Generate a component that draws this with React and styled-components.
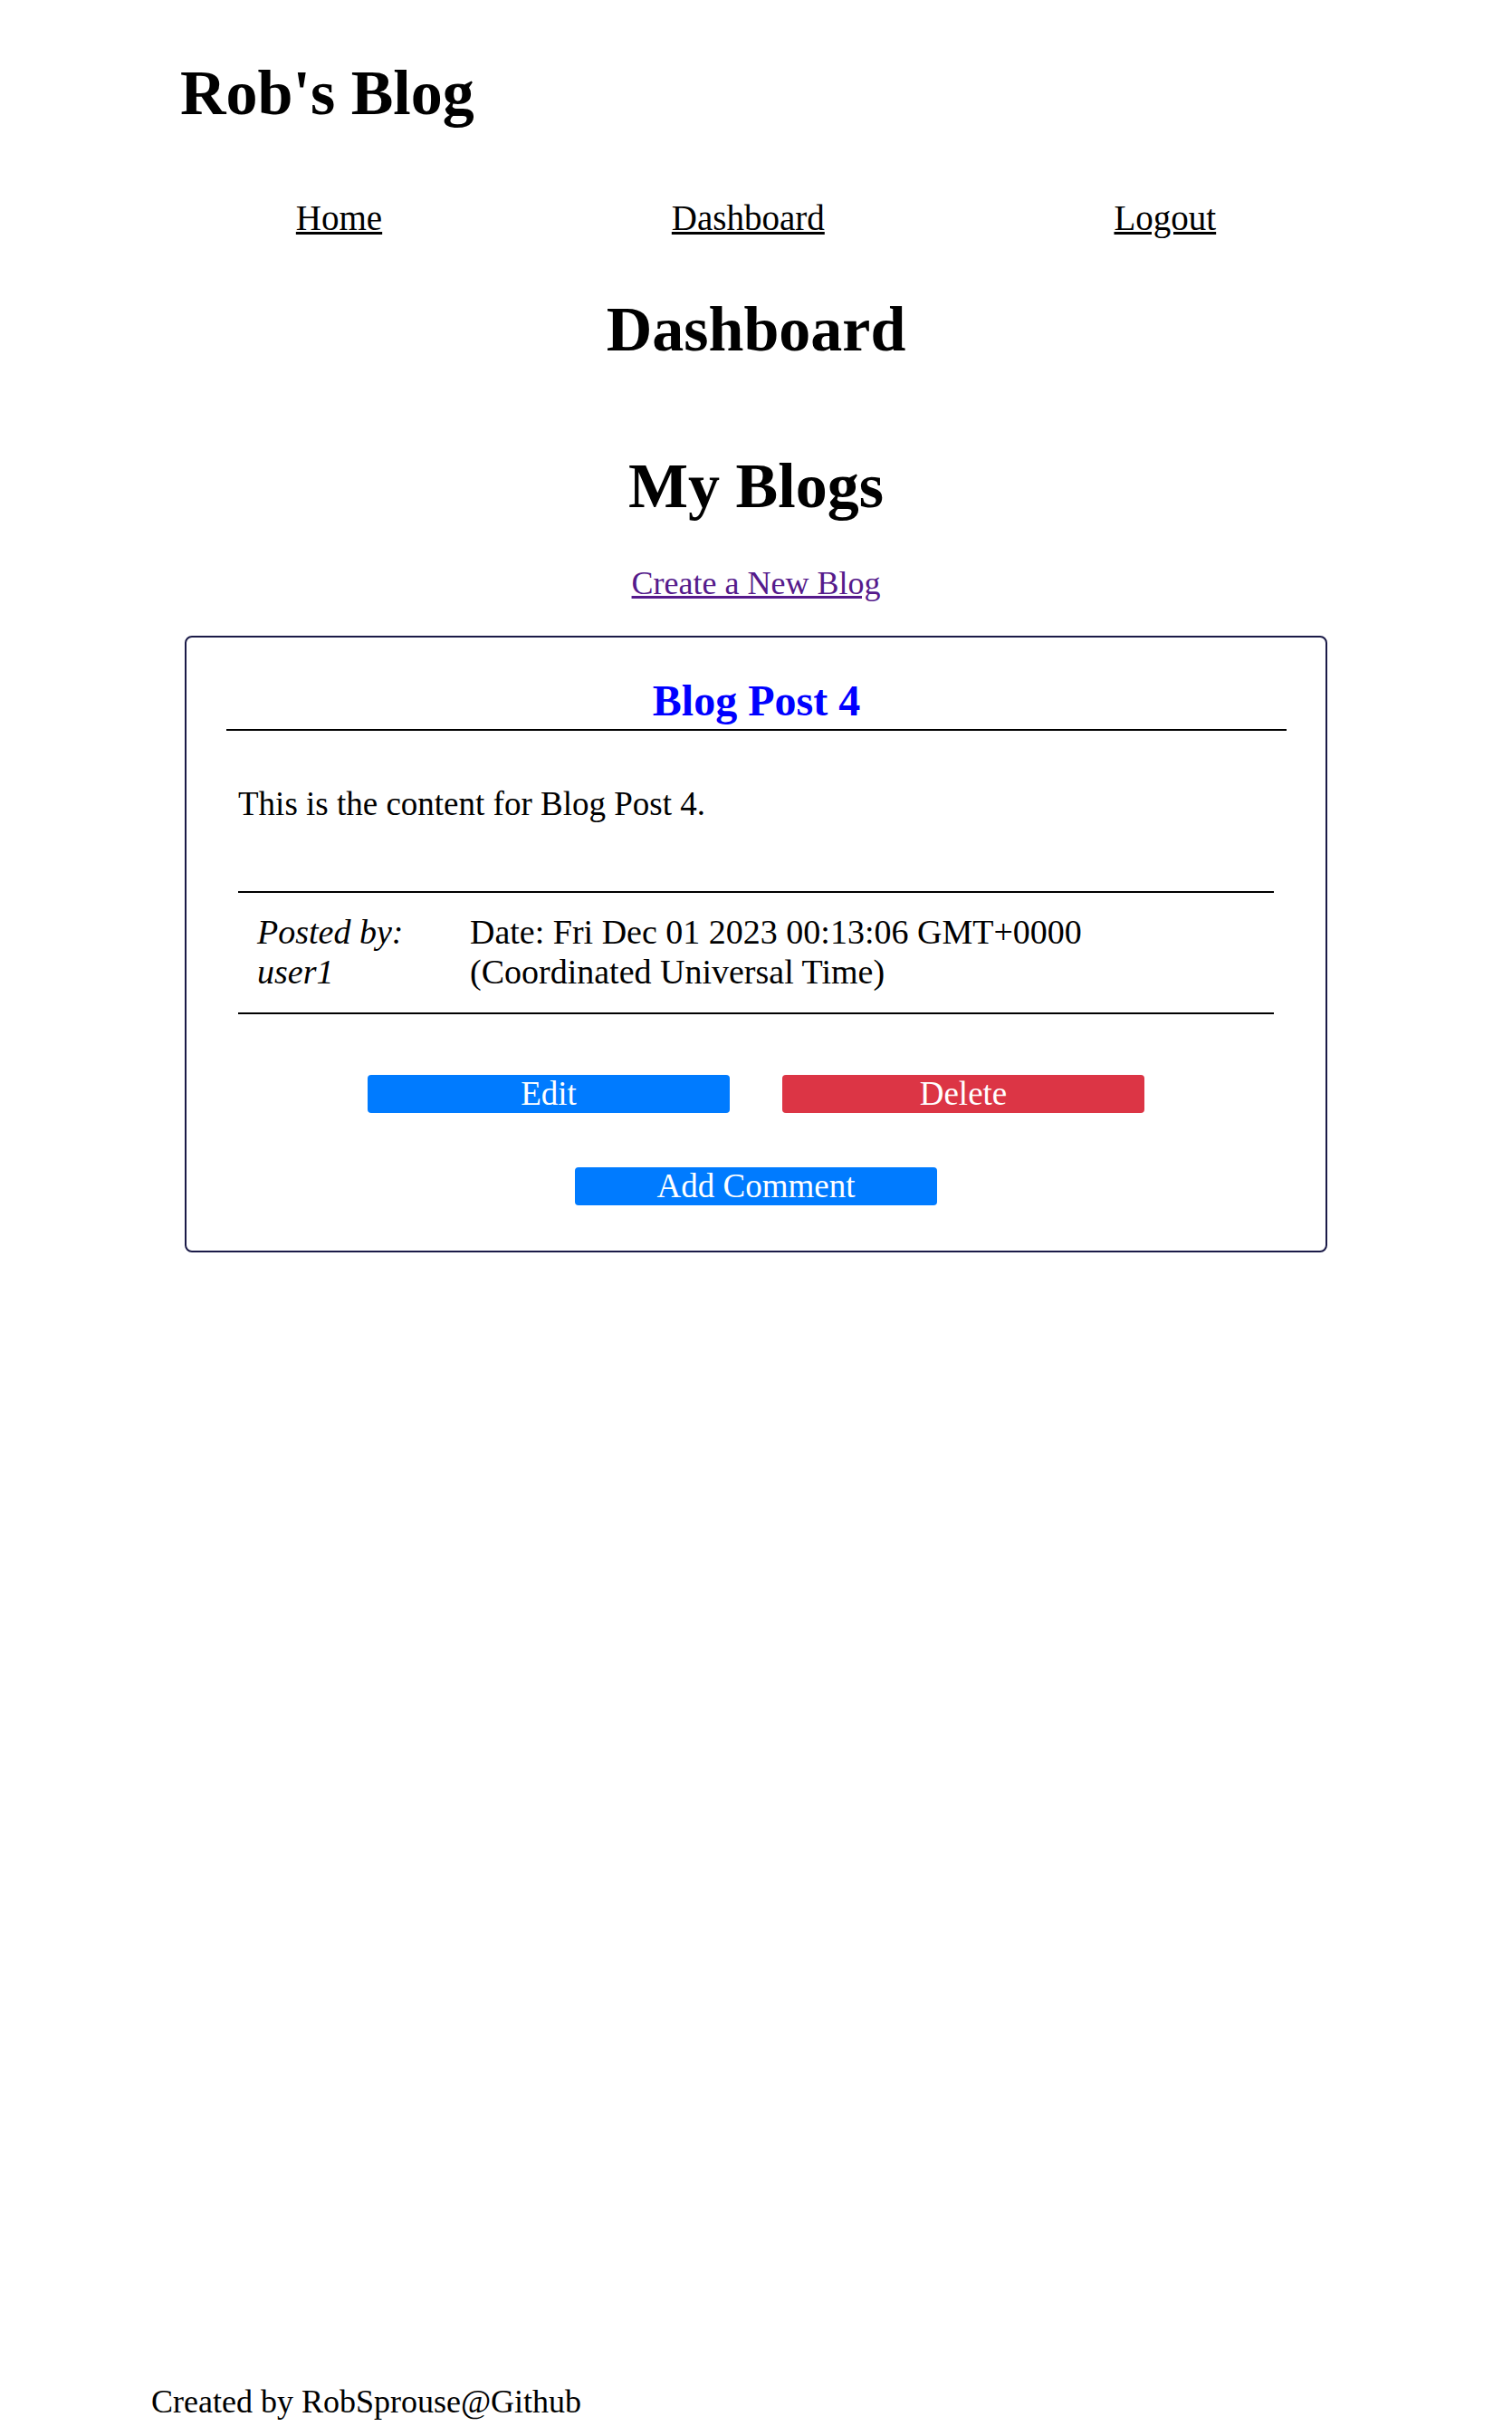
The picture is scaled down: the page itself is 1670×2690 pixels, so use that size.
import React from "react";
import styled, { createGlobalStyle } from "styled-components";

const GlobalStyle = createGlobalStyle`
  html, body {
    margin: 0;
    padding: 0;
  }
  body {
    font-family: "Liberation Serif", "Times New Roman", serif;
    font-size: 37px;
    color: #000;
    background: #fff;
  }
  * {
    box-sizing: border-box;
  }
`;

const post = {
  id: 4,
  title: "Blog Post 4",
  content: "This is the content for Blog Post 4.",
  author: "user1",
  date: "Fri Dec 01 2023 00:13:06 GMT+0000 (Coordinated Universal Time)",
};

const App = () => {
  return (
    <>
      <GlobalStyle />
      <Shell>
        <Header>
          <SiteTitle>Rob's Blog</SiteTitle>
          <Nav>
            <NavLink href="#home">Home</NavLink>
            <NavLink href="#dashboard">Dashboard</NavLink>
            <NavLink href="#logout">Logout</NavLink>
          </Nav>
        </Header>

        <Main>
          <PageTitle $top={61}>Dashboard</PageTitle>
          <PageTitle $top={93}>My Blogs</PageTitle>
          <CreateLink href="#new">Create a New Blog</CreateLink>

          <Card key={post.id}>
            <PostTitle>{post.title}</PostTitle>
            <PostContent>{post.content}</PostContent>
            <Meta>
              <Author>Posted by: {post.author}</Author>
              <PostDate>Date: {post.date}</PostDate>
            </Meta>
            <ButtonRow $top={67}>
              <Button>Edit</Button>
              <Button $variant="danger">Delete</Button>
            </ButtonRow>
            <ButtonRow $top={60}>
              <Button>Add Comment</Button>
            </ButtonRow>
          </Card>
        </Main>

        <Footer>Created by RobSprouse@Github</Footer>
      </Shell>
    </>
  );
};

const Shell = styled.div`
  display: flex;
  flex-direction: column;
  min-height: 100vh;
  padding: 0 167px;
`;

const Header = styled.header`
  display: flex;
  flex-direction: column;
`;

const SiteTitle = styled.h1`
  margin: 63px 0 0 32px;
  font-size: 70px;
  font-weight: bold;
  line-height: normal;
`;

const Nav = styled.nav`
  display: flex;
  justify-content: space-around;
  margin-top: 75px;
  font-size: 39px;
  line-height: normal;
`;

const NavLink = styled.a`
  color: #000;
  text-decoration: underline;
`;

const Main = styled.main`
  display: flex;
  flex-direction: column;
  align-items: stretch;
`;

const PageTitle = styled.h2`
  margin: ${(p) => p.$top}px 0 0;
  font-size: 70px;
  font-weight: bold;
  text-align: center;
  line-height: normal;
`;

const CreateLink = styled.a`
  align-self: center;
  margin-top: 46px;
  color: #551a8b;
  font-size: 36px;
  text-decoration: underline;
  line-height: normal;
`;

const Card = styled.section`
  margin: 37px 37px 0;
  padding: 42px 0 50px;
  border: 2px solid #1b1b48;
  border-radius: 8px;
`;

const PostTitle = styled.h3`
  margin: 0 43px 0 44px;
  padding-bottom: 4px;
  border-bottom: 2px solid #000;
  font-size: 48px;
  font-weight: bold;
  color: #0000ff;
  text-align: center;
  line-height: normal;
`;

const PostContent = styled.p`
  margin: 59px 57px 0;
  line-height: normal;
`;

const Meta = styled.div`
  display: grid;
  grid-template-columns: 214px 1fr;
  column-gap: 21px;
  margin: 75px 57px 0;
  padding: 21px 21px 23px;
  border-top: 2px solid #000;
  border-bottom: 2px solid #000;
  font-size: 38px;
  line-height: 44px;
`;

const Author = styled.em`
  display: block;
  font-style: italic;
`;

const PostDate = styled.span`
  display: block;
`;

const ButtonRow = styled.div`
  display: flex;
  justify-content: center;
  gap: 58px;
  margin-top: ${(p) => p.$top}px;
`;

const Button = styled.button`
  width: 400px;
  height: 42px;
  padding: 0;
  border: none;
  border-radius: 4px;
  background: ${(p) => (p.$variant === "danger" ? "#dc3545" : "#007bff")};
  color: #fff;
  font-family: "Liberation Serif", "Times New Roman", serif;
  font-size: 37px;
  line-height: 42px;
  cursor: pointer;
`;

const Footer = styled.footer`
  margin-top: auto;
  padding-bottom: 17px;
  font-size: 36px;
  line-height: normal;
`;

export default App;
